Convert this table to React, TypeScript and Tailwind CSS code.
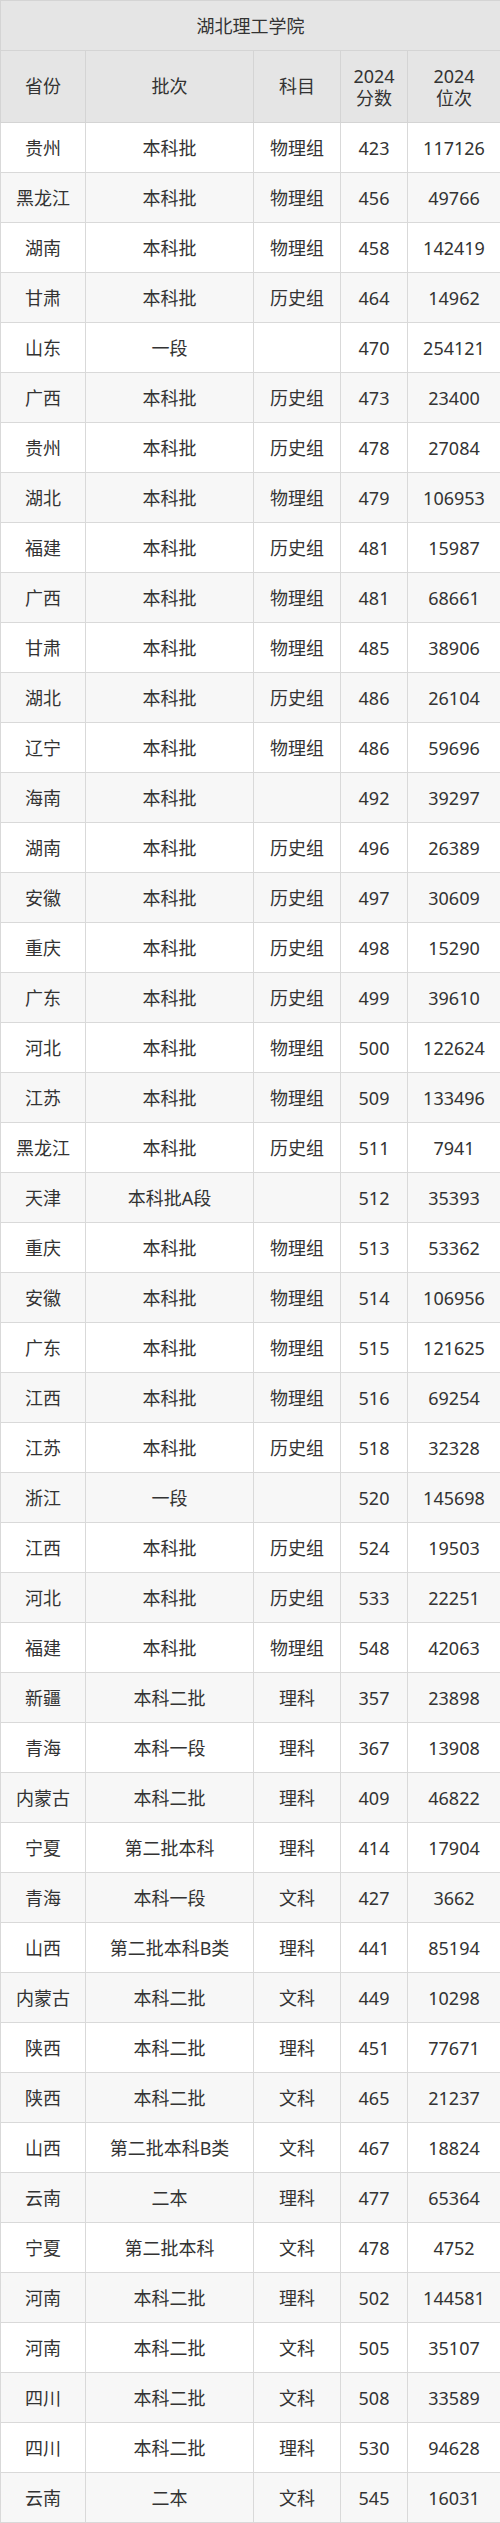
import React from "react";

const rows: [string, string, string, string, string][] = [
  ["贵州", "本科批", "物理组", "423", "117126"],
  ["黑龙江", "本科批", "物理组", "456", "49766"],
  ["湖南", "本科批", "物理组", "458", "142419"],
  ["甘肃", "本科批", "历史组", "464", "14962"],
  ["山东", "一段", "", "470", "254121"],
  ["广西", "本科批", "历史组", "473", "23400"],
  ["贵州", "本科批", "历史组", "478", "27084"],
  ["湖北", "本科批", "物理组", "479", "106953"],
  ["福建", "本科批", "历史组", "481", "15987"],
  ["广西", "本科批", "物理组", "481", "68661"],
  ["甘肃", "本科批", "物理组", "485", "38906"],
  ["湖北", "本科批", "历史组", "486", "26104"],
  ["辽宁", "本科批", "物理组", "486", "59696"],
  ["海南", "本科批", "", "492", "39297"],
  ["湖南", "本科批", "历史组", "496", "26389"],
  ["安徽", "本科批", "历史组", "497", "30609"],
  ["重庆", "本科批", "历史组", "498", "15290"],
  ["广东", "本科批", "历史组", "499", "39610"],
  ["河北", "本科批", "物理组", "500", "122624"],
  ["江苏", "本科批", "物理组", "509", "133496"],
  ["黑龙江", "本科批", "历史组", "511", "7941"],
  ["天津", "本科批A段", "", "512", "35393"],
  ["重庆", "本科批", "物理组", "513", "53362"],
  ["安徽", "本科批", "物理组", "514", "106956"],
  ["广东", "本科批", "物理组", "515", "121625"],
  ["江西", "本科批", "物理组", "516", "69254"],
  ["江苏", "本科批", "历史组", "518", "32328"],
  ["浙江", "一段", "", "520", "145698"],
  ["江西", "本科批", "历史组", "524", "19503"],
  ["河北", "本科批", "历史组", "533", "22251"],
  ["福建", "本科批", "物理组", "548", "42063"],
  ["新疆", "本科二批", "理科", "357", "23898"],
  ["青海", "本科一段", "理科", "367", "13908"],
  ["内蒙古", "本科二批", "理科", "409", "46822"],
  ["宁夏", "第二批本科", "理科", "414", "17904"],
  ["青海", "本科一段", "文科", "427", "3662"],
  ["山西", "第二批本科B类", "理科", "441", "85194"],
  ["内蒙古", "本科二批", "文科", "449", "10298"],
  ["陕西", "本科二批", "理科", "451", "77671"],
  ["陕西", "本科二批", "文科", "465", "21237"],
  ["山西", "第二批本科B类", "文科", "467", "18824"],
  ["云南", "二本", "理科", "477", "65364"],
  ["宁夏", "第二批本科", "文科", "478", "4752"],
  ["河南", "本科二批", "理科", "502", "144581"],
  ["河南", "本科二批", "文科", "505", "35107"],
  ["四川", "本科二批", "文科", "508", "33589"],
  ["四川", "本科二批", "理科", "530", "94628"],
  ["云南", "二本", "文科", "545", "16031"],
];

const font = {
  fontFamily: '"Noto Sans", "Noto Sans CJK SC", sans-serif',
};

export default function App() {
  return (
    <div className="w-[500px] bg-white text-[#333333] text-[18px]" style={font}>
      <table className="w-[500px] border-collapse table-fixed">
        <colgroup>
          <col className="w-[85px]" />
          <col className="w-[168px]" />
          <col className="w-[87px]" />
          <col className="w-[67px]" />
          <col className="w-[93px]" />
        </colgroup>
        <thead>
          <tr className="h-[50px] bg-[#e5e5e5]">
            <th colSpan={5} className="border border-[#d4d4d4] font-normal text-center leading-none">
              湖北理工学院
            </th>
          </tr>
          <tr className="h-[72px] bg-[#e5e5e5]">
            <th className="border border-[#d4d4d4] font-normal">省份</th>
            <th className="border border-[#d4d4d4] font-normal">批次</th>
            <th className="border border-[#d4d4d4] font-normal">科目</th>
            <th className="border border-[#d4d4d4] font-normal leading-[22px]">
              2024
              <br />
              分数
            </th>
            <th className="border border-[#d4d4d4] font-normal leading-[22px]">
              2024
              <br />
              位次
            </th>
          </tr>
        </thead>
        <tbody>
          {rows.map((r, i) => (
            <tr key={i} className={`h-[50px] ${i % 2 === 1 ? "bg-[#f7f7f7]" : "bg-white"}`}>
              {r.map((c, j) => (
                <td key={j} className="border border-[#d9d9d9] text-center p-0 leading-none">
                  {c}
                </td>
              ))}
            </tr>
          ))}
        </tbody>
      </table>
    </div>
  );
}
